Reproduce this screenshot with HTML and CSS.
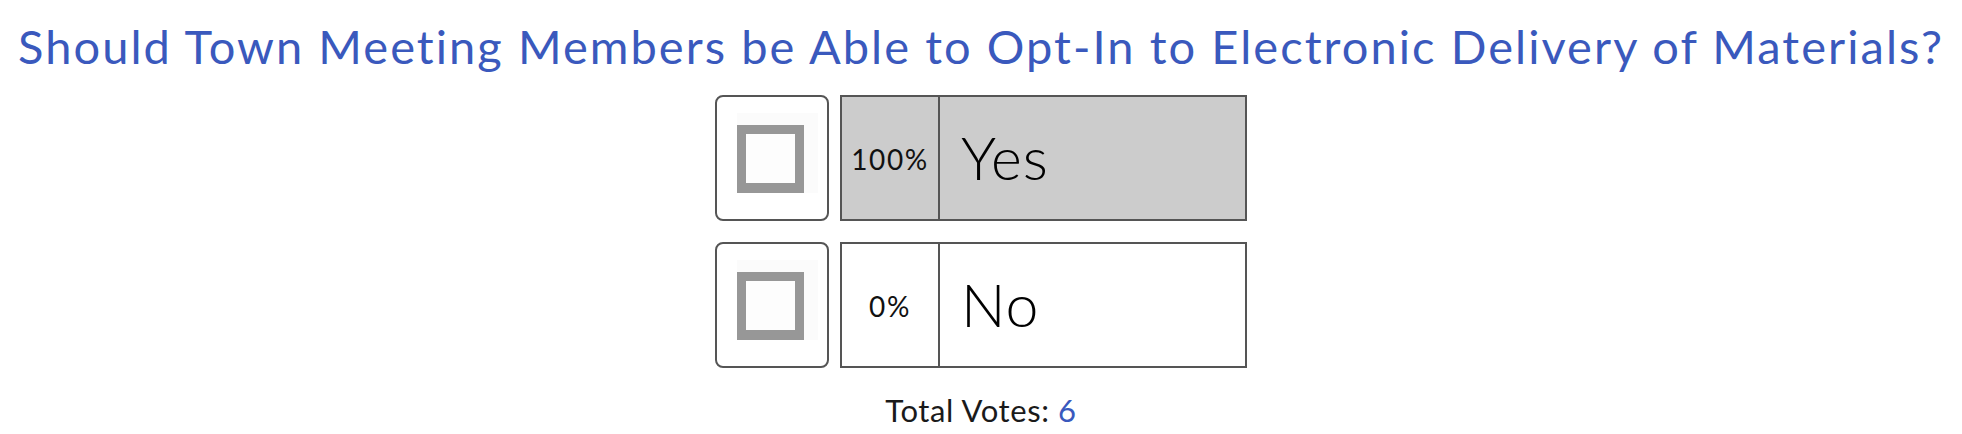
FILE: index.html
```html
<!DOCTYPE html>
<html lang="en">
<head>
<meta charset="utf-8">
<title>Poll</title>
<link rel="stylesheet" href="styles.css">
</head>
<body>
<div class="poll">
  <h1 class="question">Should Town Meeting Members be Able to Opt-In to Electronic Delivery of Materials?</h1>
  <div class="options">
    <div class="option">
      <button class="vote-btn" type="button" aria-label="Vote Yes">
        <svg class="check-img" width="81" height="80" viewBox="0 0 81 80">
          <rect x="0" y="0" width="81" height="80" fill="#fbfbfb"/>
          <rect x="0" y="12" width="67" height="68" fill="#979797"/>
          <rect x="9" y="21" width="49" height="49" fill="#fdfdfd"/>
        </svg>
      </button>
      <div class="bar">
        <div class="bar-fill" style="width:100%"></div>
        <div class="pct">100%</div>
        <div class="label">Yes</div>
      </div>
    </div>
    <div class="option">
      <button class="vote-btn" type="button" aria-label="Vote No">
        <svg class="check-img" width="81" height="80" viewBox="0 0 81 80">
          <rect x="0" y="0" width="81" height="80" fill="#fbfbfb"/>
          <rect x="0" y="12" width="67" height="68" fill="#979797"/>
          <rect x="9" y="21" width="49" height="49" fill="#fdfdfd"/>
        </svg>
      </button>
      <div class="bar">
        <div class="bar-fill" style="width:0%"></div>
        <div class="pct">0%</div>
        <div class="label">No</div>
      </div>
    </div>
  </div>
  <div class="total">Total Votes: <span class="total-num">6</span></div>
</div>
</body>
</html>
```
FILE: styles.css
```css
html, body {
  margin: 0;
  padding: 0;
  background: #ffffff;
}

body {
  font-family: Lato, "Open Sans", "Liberation Sans", sans-serif;
  color: #222222;
}

.poll {
  display: flex;
  flex-direction: column;
  align-items: center;
}

.question {
  margin: 16px 0 0 0;
  font-size: 47px;
  font-weight: 400;
  line-height: 60px;
  letter-spacing: 2.05px;
  color: #3a59bd;
  text-align: center;
  white-space: nowrap;
}

.options {
  margin-top: 19px;
  display: flex;
  flex-direction: column;
  gap: 21px;
}

.option {
  display: flex;
  gap: 11px;
}

.vote-btn {
  box-sizing: border-box;
  width: 114px;
  height: 126px;
  margin: 0;
  padding: 16px 0 0 20px;
  border: 2px solid #555555;
  border-radius: 8px;
  background: #ffffff;
  display: flex;
  align-items: flex-start;
  justify-content: flex-start;
  cursor: pointer;
}

.check-img {
  display: block;
}

.bar {
  position: relative;
  box-sizing: border-box;
  width: 407px;
  height: 126px;
  border: 2px solid #555555;
  display: flex;
  background: #ffffff;
}

.bar-fill {
  position: absolute;
  left: 0;
  top: 0;
  bottom: 0;
  background: #cccccc;
}

.pct {
  position: relative;
  width: 98px;
  border-right: 2px solid #555555;
  display: flex;
  align-items: center;
  justify-content: center;
  font-size: 28px;
  font-weight: 400;
  letter-spacing: 1.6px;
  color: #111111;
  padding-top: 2px;
  box-sizing: border-box;
}

.label {
  position: relative;
  flex: 1;
  display: flex;
  align-items: center;
  padding-left: 21px;
  padding-bottom: 2px;
  font-size: 59px;
  font-weight: 300;
  color: #000000;
  letter-spacing: 1px;
}

.total {
  margin-top: 22px;
  font-size: 31px;
  line-height: 40px;
  color: #1a1a1a;
  font-weight: 400;
  letter-spacing: 0.6px;
}

.total-num {
  color: #3a59bd;
}
```
